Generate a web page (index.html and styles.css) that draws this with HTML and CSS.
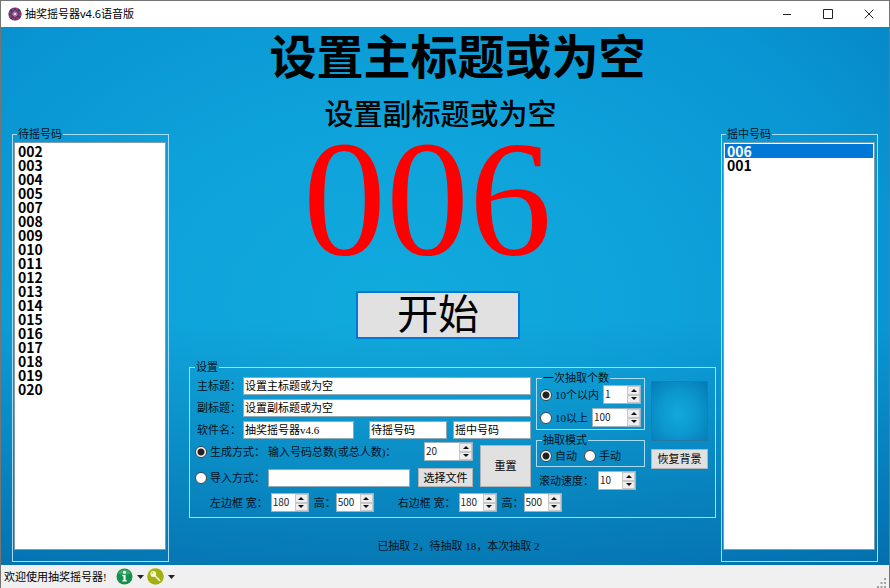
FILE: index.html
```html
<!DOCTYPE html>
<html lang="zh-CN">
<head>
<meta charset="utf-8">
<title>抽奖摇号器v4.6语音版</title>
<link rel="stylesheet" href="styles.css">
</head>
<body>
<div class="window">
  <header class="titlebar">
    <svg class="app-icon" viewBox="0 0 14 14" aria-hidden="true">
      <circle cx="7" cy="7" r="6.6" fill="#3a3a78"/>
      <circle cx="7" cy="7" r="5.2" fill="none" stroke="#b0345c" stroke-width="2.2" stroke-dasharray="2.4 1.7"/>
      <circle cx="7" cy="7" r="3" fill="#8c3a70"/>
      <path d="M7 3.6V10.4M3.6 7H10.4M4.8 4.8L9.2 9.2M9.2 4.8L4.8 9.2" stroke="#c9a0c4" stroke-width=".7"/>
      <circle cx="7" cy="7" r="1.3" fill="#e8d8e4"/>
    </svg>
    <span class="app-title">抽奖摇号器v4.6语音版</span>
    <div class="window-buttons">
      <button type="button" aria-label="最小化"><svg viewBox="0 0 10 10"><path d="M1 5.5H9"/></svg></button>
      <button type="button" aria-label="最大化"><svg viewBox="0 0 10 10"><path d="M.5 .5H9.500V9.500H.5Z"/></svg></button>
      <button type="button" aria-label="关闭"><svg viewBox="0 0 10 10"><path d="M.7 .7L9.300 9.300M9.300 .7L.7 9.300"/></svg></button>
    </div>
  </header>

  <main class="stage">
    <fieldset class="group pool">
      <legend>待摇号码</legend>
      <select class="list" size="2" aria-label="待摇号码">
        <option>002</option><option>003</option><option>004</option><option>005</option>
        <option>007</option><option>008</option><option>009</option><option>010</option>
        <option>011</option><option>012</option><option>013</option><option>014</option>
        <option>015</option><option>016</option><option>017</option><option>018</option>
        <option>019</option><option>020</option>
      </select>
    </fieldset>

    <section class="center">
      <h1 class="headline">设置主标题或为空</h1>
      <h2 class="subhead">设置副标题或为空</h2>
      <output class="draw">006</output>
      <button type="button" class="btn start">开始</button>

      <fieldset class="group settings">
        <legend>设置</legend>
        <div class="columns">
          <div class="form">
            <div class="row">
              <label class="name" for="main-title">主标题：</label>
              <input id="main-title" class="text grow" type="text" value="设置主标题或为空">
            </div>
            <div class="row">
              <label class="name" for="sub-title">副标题：</label>
              <input id="sub-title" class="text grow" type="text" value="设置副标题或为空">
            </div>
            <div class="row">
              <label class="name" for="app-name">软件名：</label>
              <input id="app-name" class="text grow" type="text" value="抽奖摇号器v4.6">
              <input class="text caption first" type="text" value="待摇号码" aria-label="左边框名称">
              <input class="text caption" type="text" value="摇中号码" aria-label="右边框名称">
            </div>
            <div class="source">
              <div class="source-rows">
                <div class="row">
                  <label class="choice way"><input type="radio" name="source" checked>生成方式：</label>
                  <label class="grow" for="total">输入号码总数(或总人数)：</label>
                  <span class="spin wide"><input id="total" type="number" value="20"><span class="arrows"><button type="button" class="up" aria-label="增加"></button><button type="button" class="down" aria-label="减少"></button></span></span>
                </div>
                <div class="row">
                  <label class="choice way"><input type="radio" name="source">导入方式：</label>
                  <input class="text grow" type="text" aria-label="导入文件">
                  <button type="button" class="btn file">选择文件</button>
                </div>
              </div>
              <button type="button" class="btn reset">重置</button>
            </div>
          </div>

          <div class="options">
            <fieldset class="group count">
              <legend>一次抽取个数</legend>
              <div class="row">
                <label class="choice"><input type="radio" name="count" checked>10个以内</label>
                <span class="spin"><input type="number" value="1" aria-label="10个以内"><span class="arrows"><button type="button" class="up" aria-label="增加"></button><button type="button" class="down" aria-label="减少"></button></span></span>
              </div>
              <div class="row">
                <label class="choice"><input type="radio" name="count">10以上</label>
                <span class="spin wide"><input type="number" value="100" aria-label="10以上"><span class="arrows"><button type="button" class="up" aria-label="增加"></button><button type="button" class="down" aria-label="减少"></button></span></span>
              </div>
            </fieldset>
            <fieldset class="group mode">
              <legend>抽取模式</legend>
              <div class="row">
                <label class="choice"><input type="radio" name="mode" checked>自动</label>
                <label class="choice"><input type="radio" name="mode">手动</label>
              </div>
            </fieldset>
            <div class="row speed">
              <label for="speed">滚动速度：</label>
              <span class="spin"><input id="speed" type="number" value="10"><span class="arrows"><button type="button" class="up" aria-label="增加"></button><button type="button" class="down" aria-label="减少"></button></span></span>
            </div>
          </div>

          <div class="backdrop">
            <div class="preview" role="img" aria-label="背景"></div>
            <button type="button" class="btn">恢复背景</button>
          </div>
        </div>

        <div class="sizes">
          <div class="pair">
            <label for="lw">左边框 宽：</label>
            <span class="spin width"><input id="lw" type="number" value="180"><span class="arrows"><button type="button" class="up" aria-label="增加"></button><button type="button" class="down" aria-label="减少"></button></span></span>
            <label for="lh">高：</label>
            <span class="spin"><input id="lh" type="number" value="500"><span class="arrows"><button type="button" class="up" aria-label="增加"></button><button type="button" class="down" aria-label="减少"></button></span></span>
          </div>
          <div class="pair">
            <label for="rw">右边框 宽：</label>
            <span class="spin width"><input id="rw" type="number" value="180"><span class="arrows"><button type="button" class="up" aria-label="增加"></button><button type="button" class="down" aria-label="减少"></button></span></span>
            <label for="rh">高：</label>
            <span class="spin"><input id="rh" type="number" value="500"><span class="arrows"><button type="button" class="up" aria-label="增加"></button><button type="button" class="down" aria-label="减少"></button></span></span>
          </div>
        </div>
      </fieldset>

      <p class="summary">已抽取 2，待抽取 18，本次抽取 2</p>
    </section>

    <fieldset class="group pool">
      <legend>摇中号码</legend>
      <select class="list" size="2" aria-label="摇中号码">
        <option selected>006</option><option>001</option>
      </select>
    </fieldset>
  </main>

  <footer class="statusbar">
    <span class="welcome">欢迎使用抽奖摇号器!</span>
    <button type="button" class="tool" aria-label="关于">
      <svg width="17" height="17" viewBox="0 0 17 17"><circle cx="8.500" cy="8.500" r="8" fill="#15904c"/><path d="M2 5.500A7.200 7.200 0 0 1 15 5.500Q8.500 8 2 5.500Z" fill="#3aa86a"/><circle cx="8.500" cy="4.200" r="1.500" fill="#fff"/><path d="M6.300 7H9.600V12.200H10.800V13.400H6.300V12.200H7.500V8.200H6.300Z" fill="#fff"/></svg>
      <svg width="7" height="4" viewBox="0 0 7 4"><path d="M0 0H7L3.500 4Z" fill="#222"/></svg>
    </button>
    <button type="button" class="tool" aria-label="注册">
      <svg width="17" height="17" viewBox="0 0 17 17"><circle cx="8.500" cy="8.500" r="8.300" fill="#a3b013"/><circle cx="6.300" cy="6" r="2.900" fill="#f4f6d8"/><circle cx="5.300" cy="5" r=".8" fill="#a3b013"/><path d="M8 7.800L13 13M10.600 11.600L11.900 10.300" stroke="#f4f6d8" stroke-width="1.600" fill="none"/></svg>
      <svg width="7" height="4" viewBox="0 0 7 4"><path d="M0 0H7L3.500 4Z" fill="#222"/></svg>
    </button>
    <svg class="grip" width="10" height="10" viewBox="0 0 10 10" aria-hidden="true"><path d="M7 0h2v2h-2zM7 4h2v2h-2zM7 8h2v2h-2zM3.500 4h2v2h-2zM3.500 8h2v2h-2zM0 8h2v2h-2z" fill="#a0a0a0"/></svg>
  </footer>
</div>
</body>
</html>
```
FILE: styles.css
```css
* {
  box-sizing: border-box;
}

body {
  margin: 0;
  color: #04121c;
  font: 11px/14px "Liberation Serif", "Noto Sans CJK SC", serif;
}

button,
input,
select {
  margin: 0;
  color: inherit;
  font: inherit;
}

.window {
  display: flex;
  flex-direction: column;
  min-height: 100vh;
  border: 1px solid #757575;
  border-bottom: 0;
}

/* Title bar */
.titlebar {
  display: flex;
  align-items: center;
  height: 26px;
  padding-left: 7px;
  background: #fff;
  color: #000;
  font-family: "Noto Sans", "Noto Sans CJK SC", sans-serif;
}

.app-icon {
  width: 14px;
  height: 14px;
}

.app-title {
  margin-left: 3px;
}

.window-buttons {
  display: flex;
  margin-left: auto;
}

.window-buttons button {
  display: grid;
  place-items: center;
  width: 41px;
  height: 26px;
  padding: 0;
  border: 0;
  background: none;
}

.window-buttons svg {
  width: 10px;
  height: 10px;
  fill: none;
  stroke: #222;
}

/* Main area */
.stage {
  display: grid;
  grid-template-columns: 157px 1fr 157px;
  flex: 1;
  padding: 0 11px;
  background:
    linear-gradient(to bottom, rgba(0, 80, 150, 0) 55%, rgba(0, 85, 145, 0.5) 100%),
    radial-gradient(ellipse 75% 90% at 44% 52%, #11abdd 0%, #0ea2da 40%, #0995d3 75%, #0585c4 100%);
}

.group {
  min-width: 0;
  margin: 0;
  padding: 0;
  border: 1px solid #a9dcf2;
}

.group legend {
  margin-left: 4px;
  padding: 0 1px;
  white-space: nowrap;
}

.pool {
  display: flex;
  margin: 100px 0 3px;
  padding: 1px 2px 11px 1px;
}

.pool legend {
  margin-left: 3px;
}

.list {
  flex: 1;
  width: 100%;
  height: 100%;
  min-height: 300px;
  padding: 1px;
  overflow: hidden;
  border: 1px solid #7f9db0;
  border-radius: 0;
  outline: 0;
  background: #fff;
  color: #000;
  font-weight: bold;
  font-size: 14px;
  font-family: "Noto Sans CJK SC", sans-serif;
}

.list option {
  display: flex;
  align-items: center;
  height: 14px;
  min-height: 0;
  padding: 0 2px;
  font-weight: bold;
}

.list option:checked {
  background: #0078d7 linear-gradient(#0078d7, #0078d7);
  color: #fff;
}

.center {
  display: flex;
  flex-direction: column;
  align-items: center;
  padding: 1px 5px 0 20px;
}

.headline,
.subhead {
  margin: 0;
  color: #000;
  white-space: nowrap;
}

.headline {
  padding-left: 10px;
  font-size: 47px;
  line-height: 60px;
}

.subhead {
  padding: 9px 24px 0 0;
  font-weight: 500;
  font-size: 29px;
  line-height: 36px;
}

.draw {
  padding-right: 50px;
  color: #f00;
  font-size: 166px;
  line-height: 130px;
}

.btn {
  padding: 0;
  border: 1px solid #b4b4b4;
  background: #e1e1e1;
  color: #000;
  text-align: center;
  white-space: nowrap;
}

.start {
  width: 164px;
  height: 48px;
  margin: 28px 29px 0 0;
  border: 2px solid #0078d7;
  font-size: 41px;
  line-height: 42px;
}

/* Settings */
.settings {
  align-self: stretch;
  margin-top: 21px;
  padding: 3px 7px 5px 5px;
}

.settings > legend {
  margin-left: 0;
}

.columns {
  display: flex;
  gap: 5px;
}

.form {
  display: flex;
  flex: 1;
  flex-direction: column;
  gap: 4px;
  min-width: 0;
}

.row,
.pair {
  display: flex;
  align-items: center;
  white-space: nowrap;
}

.grow {
  flex: 1;
}

.name {
  width: 48px;
  padding-left: 2px;
}

.text {
  width: 0;
  min-width: 0;
  height: 18px;
  padding: 0 1px 2px;
  border: 1px solid #8fa9b5;
  background: #fff;
  color: #000;
}

.caption {
  width: 78px;
  margin-left: 6px;
}

.caption.first {
  margin-left: 15px;
}

.source {
  display: flex;
  gap: 7px;
  margin-top: -1px;
}

.source-rows {
  display: flex;
  flex: 1;
  flex-direction: column;
  gap: 7px;
}

.choice {
  display: flex;
  align-items: center;
  gap: 3px;
}

.choice input {
  width: 12px;
  height: 12px;
  border: 1px solid #444;
  border-radius: 50%;
  appearance: none;
  background: #fff;
}

.choice input:checked {
  background: radial-gradient(circle, #222 0 3px, #fff 4px);
}

.way {
  width: 73px;
}

.file {
  width: 55px;
  height: 19px;
  margin-left: 8px;
}

.reset {
  width: 51px;
  height: 42px;
  margin-top: 3px;
}

.spin {
  display: flex;
  width: 38px;
  height: 19px;
  border: 1px solid #9db4c0;
  background: #fff;
}

.spin.wide {
  width: 49px;
}

.spin input {
  flex: 1;
  width: 0;
  min-width: 0;
  padding: 0 0 2px 1px;
  border: 0;
  appearance: textfield;
  background: none;
  color: #222;
  font-size: 10px;
  font-family: "Noto Sans CJK SC", sans-serif;
}

.spin input::-webkit-inner-spin-button {
  display: none;
}

.arrows {
  display: grid;
  grid-template-rows: 1fr 1fr;
  width: 13px;
}

.arrows button {
  display: grid;
  place-items: center;
  padding: 0;
  border: 1px solid #c8c8c8;
  background: #eee;
}

.arrows button::before {
  border: 3px solid transparent;
  content: "";
}

.arrows .up::before {
  border-top: 0;
  border-bottom-color: #111;
}

.arrows .down::before {
  border-bottom: 0;
  border-top-color: #111;
}

.options {
  width: 109px;
}

.options .group {
  padding: 0 3px 2px;
}

.options .group legend {
  margin-left: 2px;
}

.count {
  margin-top: -6px;
}

.count .row {
  justify-content: space-between;
}

.count .row + .row {
  margin-top: 4px;
}

.mode {
  margin-top: 3px;
}

.options .mode {
  padding: 2px 3px 3px;
}

.mode .row {
  gap: 7px;
}

.speed {
  justify-content: space-between;
  margin-top: 4px;
  padding: 0 9px 0 3px;
}

.backdrop {
  display: flex;
  flex-direction: column;
  gap: 8px;
  width: 57px;
  margin: 4px 0 0 1px;
}

.backdrop .btn {
  height: 20px;
}

.preview {
  height: 60px;
  border: 1px solid #2b76a3;
  background: radial-gradient(ellipse at 48% 55%, #12a9dc 0%, #0c99cf 45%, #0679b5 100%);
}

.sizes {
  display: flex;
  gap: 24px;
  margin-top: 3px;
  padding-left: 15px;
}

.pair .width {
  margin: 0 5px 0 3px;
}

.summary {
  margin: 21px 0 0 12px;
}

/* Status bar */
.statusbar {
  display: flex;
  align-items: center;
  height: 23px;
  padding: 0 2px 0 3px;
  background: #f0f0f0;
  color: #000;
}

.welcome {
  margin-right: 9px;
}

.tool {
  display: flex;
  align-items: center;
  gap: 4px;
  margin-right: 3px;
  padding: 0;
  border: 0;
  background: none;
}

.grip {
  align-self: flex-end;
  margin-left: auto;
}
```
